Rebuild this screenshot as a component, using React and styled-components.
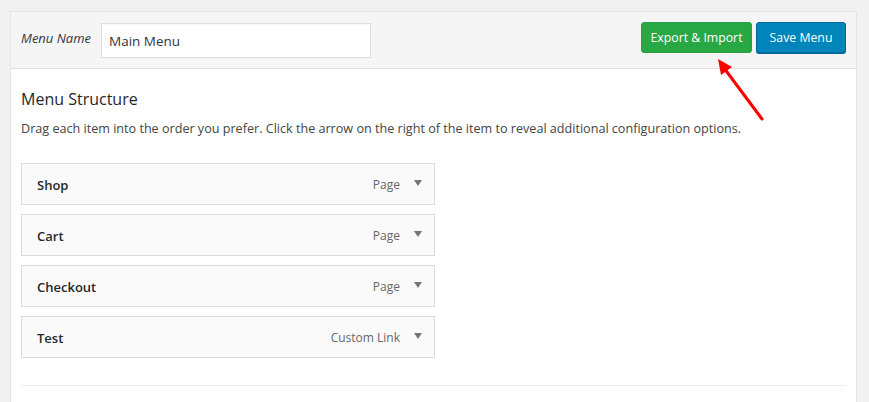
import React from "react";
import styled, { createGlobalStyle } from "styled-components";

const Global = createGlobalStyle`
  html, body { margin: 0; padding: 0; background: #f1f1f1; }
  body { font-family: "Open Sans", "Noto Sans", sans-serif; color: #23282d; }
  * { box-sizing: border-box; }
`;

const Page = styled.div`
  position: relative;
  padding: 11px 12px 0 10px;
  height: 402px;
  overflow: hidden;
`;

const Panel = styled.div`
  background: #fff;
  border: 1px solid #e5e5e5;
  min-height: 400px;
`;

const Header = styled.div`
  display: flex;
  align-items: center;
  height: 57px;
  padding: 0 10px 0 10px;
  background: #f5f5f5;
  border-bottom: 1px solid #dddddd;
`;

const NameLabel = styled.label`
  font-style: italic;
  font-size: 13px;
  color: #32373c;
  margin-right: 10px;
  margin-top: -4px;
`;

const NameInput = styled.input`
  width: 270px;
  height: 35px;
  border: 1px solid #dddddd;
  background: #fff;
  padding: 1px 7px 0;
  font: inherit;
  font-size: 13.5px;
  color: #32373c;
  box-shadow: inset 0 1px 2px rgba(0, 0, 0, 0.04);
  outline: none;
`;

const Actions = styled.div`
  margin-left: auto;
  display: flex;
  gap: 4px;
  margin-top: -5px;
`;

const Button = styled.button`
  height: 31px;
  padding: 0;
  border-radius: 3px;
  font: inherit;
  font-size: 12.3px;
  white-space: nowrap;
  color: #fff;
  cursor: pointer;
  border: 1px solid ${(p) => (p.$tone === "green" ? "#25a244" : "#006799")};
  background: ${(p) => (p.$tone === "green" ? "#28a745" : "#0085ba")};
  box-shadow: ${(p) => (p.$tone === "green" ? "none" : "0 1px 0 #006799")};
  width: ${(p) => p.$w}px;
`;

const Body = styled.div`
  padding: 19px 10px 0 10px;
`;

const Title = styled.h3`
  margin: 0;
  font-size: 16px;
  font-weight: 400;
  line-height: 22px;
  color: #23282d;
`;

const Desc = styled.p`
  margin: 10px 0 0;
  font-size: 12.6px;
  line-height: 18px;
  color: #444;
`;

const List = styled.ul`
  list-style: none;
  margin: 25px 0 0;
  padding: 0;
  display: flex;
  flex-direction: column;
  gap: 9px;
  width: 414px;
`;

const Item = styled.li`
  height: 42px;
  display: flex;
  align-items: center;
  padding: 1px 12px 0 15px;
  background: #fafafa;
  border: 1px solid #dcdcdc;
`;

const ItemTitle = styled.span`
  font-size: 13px;
  font-weight: 600;
  color: #23282d;
`;

const ItemType = styled.span`
  margin-left: auto;
  font-size: 12px;
  color: #666;
`;

const Caret = styled.span`
  width: 0;
  height: 0;
  margin-left: 14px;
  margin-top: -4px;
  border-left: 4px solid transparent;
  border-right: 4px solid transparent;
  border-top: 6px solid #72777c;
`;

const Rule = styled.hr`
  margin: 27px 0 0;
  border: 0;
  border-top: 1px solid #eeeeee;
`;

const Pointer = styled.svg`
  position: absolute;
  left: 0;
  top: 0;
  pointer-events: none;
`;

const items = [
  { title: "Shop", type: "Page" },
  { title: "Cart", type: "Page" },
  { title: "Checkout", type: "Page" },
  { title: "Test", type: "Custom Link" },
];

export default function App() {
  return (
    <>
      <Global />
      <Page>
        <Panel>
          <Header>
            <NameLabel htmlFor="menu-name">Menu Name</NameLabel>
            <NameInput id="menu-name" defaultValue="Main Menu" />
            <Actions>
              <Button $tone="green" $w={111}>Export &amp; Import</Button>
              <Button $tone="blue" $w={90}>Save Menu</Button>
            </Actions>
          </Header>
          <Body>
            <Title>Menu Structure</Title>
            <Desc>
              Drag each item into the order you prefer. Click the arrow on the right of the item to reveal additional configuration options.
            </Desc>
            <List>
              {items.map((it) => (
                <Item key={it.title}>
                  <ItemTitle>{it.title}</ItemTitle>
                  <ItemType>{it.type}</ItemType>
                  <Caret />
                </Item>
              ))}
            </List>
            <Rule />
          </Body>
        </Panel>
        <Pointer width="869" height="402" viewBox="0 0 869 402">
          <line x1="762" y1="119" x2="724" y2="68" stroke="#f00" strokeWidth="3" strokeLinecap="round" />
          <polygon points="718,59 732,67 721,75" fill="#f00" />
        </Pointer>
      </Page>
    </>
  );
}
